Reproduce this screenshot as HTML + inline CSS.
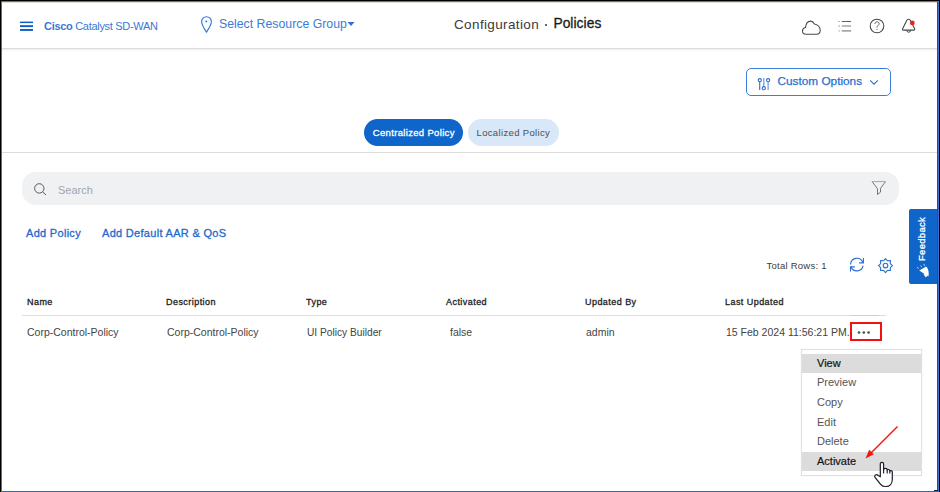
<!DOCTYPE html>
<html><head><meta charset="utf-8">
<style>
*{box-sizing:border-box;margin:0;padding:0}
html,body{width:940px;height:492px;overflow:hidden;background:#fff}
body{font-family:"Liberation Sans",sans-serif;position:relative;color:#333}
.abs{position:absolute;white-space:nowrap}
#frame{position:absolute;left:0;top:0;width:940px;height:492px;pointer-events:none;z-index:50}
.hdr{position:absolute;left:0;top:0;width:940px;height:49px;background:#fff;border-bottom:1px solid #dcdcdc;box-shadow:0 1px 2px rgba(0,0,0,.08)}
.blue{color:#2b6fcf}
</style></head><body>

<div class="hdr"></div>
<!-- hamburger -->
<svg class="abs" style="left:19px;top:20px" width="16" height="12" viewBox="0 0 16 12"><g fill="#0d5ec8"><rect x="1" y="1.6" width="13" height="1.5"/><rect x="1" y="5.2" width="13" height="1.9"/><rect x="1" y="9" width="13" height="1.9"/></g></svg>
<div class="abs" style="left:44px;top:20px;font-size:11px;letter-spacing:-0.3px;color:#3a78d4"><b>Cisco</b> Catalyst SD-WAN</div>

<!-- pin -->
<svg class="abs" style="left:199px;top:15px" width="15" height="19" viewBox="0 0 15 19"><path d="M7.5 17.1 C5 13.5 2.65 10.2 2.65 6.6 A4.85 4.85 0 0 1 12.35 6.6 C12.35 10.2 10 13.5 7.5 17.1Z" fill="none" stroke="#2f74d6" stroke-width="1.1"/><circle cx="7.3" cy="6.4" r="0.95" fill="#2f74d6"/></svg>
<div class="abs" style="left:219px;top:17.1px;font-size:12.3px;color:#3d7bd6">Select Resource Group</div>
<svg class="abs" style="left:347px;top:21px" width="8" height="6" viewBox="0 0 8 6"><path d="M0.5 1 L7.5 1 L4 5Z" fill="#2f6fd0"/></svg>

<div class="abs" style="left:454px;top:16.6px;font-size:13.5px;letter-spacing:0.37px;color:#3a3a3a">Configuration</div><div class="abs" style="left:545px;top:23.5px;width:2px;height:2px;border-radius:1px;background:#333"></div><div class="abs" style="left:553.4px;top:16.3px;font-size:13.8px;letter-spacing:0.05px;-webkit-text-stroke:0.3px #1a1a1a;color:#1a1a1a">Policies</div>

<!-- cloud -->
<svg class="abs" style="left:801px;top:20px" width="21" height="16" viewBox="0 0 21 16"><path d="M5 14.2 C2.8 14.2 1.5 12.8 1.5 11 C1.5 9.3 2.6 8.1 4.4 7.6 C4.9 4 6.9 1.1 9.5 1.1 C11.4 1.1 12.6 2.3 13.4 3.9 C16.8 4.7 19.2 7.3 19.2 10.3 C19.2 12.6 17.8 14.2 15.6 14.2 Z" fill="none" stroke="#4a4a4a" stroke-width="1.05"/></svg>
<!-- list -->
<svg class="abs" style="left:838px;top:20px" width="15" height="13" viewBox="0 0 15 13"><rect x="0.6" y="1" width="1" height="1" fill="#777"/><rect x="0.6" y="5.2" width="1" height="1.6" fill="#999"/><rect x="0.6" y="10.1" width="1" height="1.6" fill="#aaa"/><path d="M3.7 1.5 H13.1" stroke="#666" stroke-width="1.1"/><path d="M3.7 6 H13.1 M3.7 10.9 H13.1" stroke="#a8a8a8" stroke-width="1.7"/></svg>
<!-- help -->
<svg class="abs" style="left:869px;top:18px" width="16" height="16" viewBox="0 0 16 16"><circle cx="8" cy="8" r="6.8" fill="none" stroke="#444" stroke-width="1.05"/><path d="M5.9 5.9 C5.9 4.6 6.8 3.8 8 3.8 C9.3 3.8 10.2 4.7 10.2 5.8 C10.2 7.2 8 7.6 8 9.6" fill="none" stroke="#555" stroke-width="0.9"/><circle cx="8" cy="11.3" r="0.6" fill="#555"/></svg>
<!-- bell -->
<svg class="abs" style="left:900px;top:17px" width="18" height="18" viewBox="0 0 18 18"><path d="M8.5 2.2 C7.1 2.2 6.5 3.3 6.2 4.5 L2.6 11.8 C2.2 12.6 2.6 13.1 3.4 13.1 H13.8 C14.6 13.1 15 12.6 14.6 11.8 L11 4.5 C10.7 3.3 10 2.2 8.5 2.2Z" fill="none" stroke="#444" stroke-width="1.05"/><path d="M6.8 13.3 A1.9 1.9 0 0 0 10.6 13.3" fill="none" stroke="#444" stroke-width="1"/><circle cx="12.3" cy="5.9" r="2.4" fill="#e0281c"/></svg>

<!-- custom options -->
<div class="abs" style="left:746px;top:68px;width:145px;height:28px;border:1px solid #3a80d8;border-radius:5px"></div>
<svg class="abs" style="left:757px;top:77px" width="15" height="14" viewBox="0 0 15 14"><g fill="none" stroke="#2a6fd0" stroke-width="1.1"><circle cx="2.8" cy="3.2" r="1.6"/><path d="M2.7 4.8 V13"/><path d="M6.8 1 V9.4" stroke="#5a90d8"/><circle cx="6.8" cy="11.2" r="1.6"/><circle cx="11.1" cy="3.2" r="1.6"/><path d="M11.1 4.8 V13" stroke="#5a90d8"/></g></svg>
<div class="abs" style="left:777.5px;top:74.3px;font-size:11.8px;color:#2a6fd0;-webkit-text-stroke:0.25px #2a6fd0">Custom Options</div>
<svg class="abs" style="left:869px;top:79px" width="10" height="7" viewBox="0 0 10 7"><path d="M1.2 1.3 L5 5.1 L8.8 1.3" fill="none" stroke="#2a6fd0" stroke-width="1.1"/></svg>

<!-- tabs -->
<div class="abs" style="left:364px;top:119px;width:99px;height:27px;border-radius:14px;background:#0f65c9"></div>
<div class="abs" style="left:372.8px;top:127.2px;font-size:9.5px;color:#fff;letter-spacing:0.33px;-webkit-text-stroke:0.3px #fff">Centralized Policy</div>
<div class="abs" style="left:468px;top:119px;width:91px;height:27px;border-radius:14px;background:#d8e8f8"></div>
<div class="abs" style="left:476.5px;top:127.2px;font-size:9.5px;letter-spacing:0.35px;color:#50555c;-webkit-text-stroke:0.05px #50555c">Localized Policy</div>
<div class="abs" style="left:2px;top:152px;width:936px;height:1px;background:#dcdcdc"></div>

<!-- search -->
<div class="abs" style="left:22px;top:172px;width:877px;height:33px;border-radius:14px;background:#f0f1f3"></div>
<svg class="abs" style="left:33px;top:182px" width="15" height="14" viewBox="0 0 15 14"><circle cx="6.3" cy="6.4" r="4.7" fill="none" stroke="#5a5a5a" stroke-width="1"/><path d="M9.6 9.8 L13 13" stroke="#5a5a5a" stroke-width="1"/></svg>
<div class="abs" style="left:58px;top:184px;font-size:11px;color:#a2a7ad">Search</div>
<svg class="abs" style="left:871px;top:180px" width="16" height="16" viewBox="0 0 16 16"><path d="M14.5 1.6 L9.5 8.4 V12.1 L6.5 14.5 V8.7 L1.1 1.6" fill="none" stroke="#5a5f6a" stroke-width="0.85" stroke-linejoin="round"/><path d="M1.1 1.6 H14.5" stroke="#a5a5a5" stroke-width="1"/></svg>

<!-- links -->
<div class="abs" style="left:26px;top:226.9px;font-size:11px;letter-spacing:0.3px;color:#1f69cc;-webkit-text-stroke:0.3px #1f69cc">Add Policy</div>
<div class="abs" style="left:102px;top:226.9px;font-size:11px;letter-spacing:0.3px;color:#1f69cc;-webkit-text-stroke:0.3px #1f69cc">Add Default AAR &amp; QoS</div>

<!-- feedback -->
<div class="abs" style="left:909px;top:209px;width:29px;height:75px;background:#0f65c9;border-radius:2px 0 0 2px"></div>
<div class="abs" style="left:915.6px;top:261px;font-size:9.5px;letter-spacing:0.3px;color:#fff;-webkit-text-stroke:0.3px #fff;transform:rotate(-90deg);transform-origin:0 0">Feedback</div>
<svg class="abs" style="left:909px;top:209px" width="29" height="75" viewBox="0 0 29 75"><path d="M10.2 61.6 L17.2 57.6 C19.5 60 20.3 64 19.4 67.4 Z" fill="#fff"/><path d="M14.5 65 L16.5 68.2 L18.2 67.3 L17 64.5Z" fill="#fff"/><g stroke="#fff" stroke-width="0.9" stroke-linecap="round" opacity="0.85"><path d="M8.3 58.6 L9.3 59.2"/><path d="M12 56.9 L12.5 57.7"/><path d="M15.1 55.3 L15.3 56.3"/></g></svg>

<!-- total rows -->
<div class="abs" style="left:766.5px;top:260.3px;font-size:9.5px;letter-spacing:0.25px;color:#3a3d40">Total Rows: 1</div>
<svg class="abs" style="left:845px;top:254px" width="54" height="23" viewBox="0 0 54 23"><g fill="none" stroke="#2a6fd0" stroke-width="1.1"><path d="M5.6 10.6 A6.3 6.3 0 0 1 17.82 8.45"/><path d="M18.4 4 V8.9 H14.1"/><path d="M18.1 11.7 A6.3 6.3 0 0 1 5.98 12.75"/><path d="M5.5 17.5 V12.9 H9.8"/><path d="M40.50 4.60 L42.49 6.80 L45.45 6.65 L45.30 9.61 L47.50 11.60 L45.30 13.59 L45.45 16.55 L42.49 16.40 L40.50 18.60 L38.51 16.40 L35.55 16.55 L35.70 13.59 L33.50 11.60 L35.70 9.61 L35.55 6.65 L38.51 6.80Z" stroke-linejoin="round"/><circle cx="40.5" cy="11.6" r="2.3"/></g></svg>

<!-- table header -->
<div class="abs" style="left:27px;top:296.5px;font-size:9px;letter-spacing:0.45px;color:#222;-webkit-text-stroke:0.3px #222">Name</div>
<div class="abs" style="left:166px;top:296.5px;font-size:9px;letter-spacing:0.45px;color:#222;-webkit-text-stroke:0.3px #222">Description</div>
<div class="abs" style="left:306px;top:296.5px;font-size:9px;letter-spacing:0.45px;color:#222;-webkit-text-stroke:0.3px #222">Type</div>
<div class="abs" style="left:446px;top:296.5px;font-size:9px;letter-spacing:0.45px;color:#222;-webkit-text-stroke:0.3px #222">Activated</div>
<div class="abs" style="left:585px;top:296.5px;font-size:9px;letter-spacing:0.45px;color:#222;-webkit-text-stroke:0.3px #222">Updated By</div>
<div class="abs" style="left:725px;top:296.5px;font-size:9px;letter-spacing:0.45px;color:#222;-webkit-text-stroke:0.3px #222">Last Updated</div>
<div class="abs" style="left:22px;top:315px;width:864px;height:1px;background:#dedede"></div>

<!-- row -->
<div class="abs" style="left:27px;top:325.6px;font-size:10.5px;color:#444">Corp-Control-Policy</div>
<div class="abs" style="left:167px;top:325.6px;font-size:10.5px;color:#444">Corp-Control-Policy</div>
<div class="abs" style="left:307px;top:326.8px;font-size:10.2px;color:#444">UI Policy Builder</div>
<div class="abs" style="left:450px;top:325.6px;font-size:10.5px;color:#444">false</div>
<div class="abs" style="left:586px;top:325.6px;font-size:10.5px;color:#444">admin</div>
<div class="abs" style="left:726px;top:325.6px;font-size:10.5px;color:#444">15 Feb 2024 11:56:21 PM.</div>
<div class="abs" style="left:850px;top:322px;width:32px;height:19px;border:2px solid #f21010"></div><div class="abs" style="left:851px;top:314.5px;width:28px;height:1px;background:#cfcfcf"></div>
<svg class="abs" style="left:857px;top:330px" width="14" height="5" viewBox="0 0 14 5"><circle cx="2" cy="2.5" r="1.35" fill="#4a4f57"/><circle cx="6.8" cy="2.5" r="1.35" fill="#4a4f57"/><circle cx="11.6" cy="2.5" r="1.35" fill="#4a4f57"/></svg>

<!-- menu -->
<div class="abs" style="left:801px;top:349px;width:121px;height:127px;background:#fff;border:1px solid #e0e0e0;box-shadow:0 0 2px rgba(0,0,0,.06)"></div>
<div class="abs" style="left:802px;top:354px;width:119px;height:19px;background:#dcdcdc"></div>
<div class="abs" style="left:802px;top:452px;width:119px;height:19px;background:#dcdcdc"></div>
<div class="abs" style="left:817px;top:356.7px;font-size:11px;color:#141414;-webkit-text-stroke:0.2px #141414">View</div>
<div class="abs" style="left:817px;top:376.2px;font-size:11px;color:#555">Preview</div>
<div class="abs" style="left:817px;top:395.8px;font-size:11px;color:#555">Copy</div>
<div class="abs" style="left:817px;top:415.8px;font-size:11px;color:#555">Edit</div>
<div class="abs" style="left:817px;top:435.3px;font-size:11px;color:#555">Delete</div>
<div class="abs" style="left:817px;top:454.7px;font-size:11px;color:#141414;-webkit-text-stroke:0.2px #141414">Activate</div>

<!-- arrow -->
<svg class="abs" style="left:860px;top:422px" width="42" height="42" viewBox="0 0 42 42"><path d="M37.5 4.5 L8 34" stroke="#f41414" stroke-width="1.5"/><path d="M5.5 36.5 L9.2 27.8 L13.8 32.3Z" fill="#f41414"/></svg>
<!-- hand cursor -->
<svg class="abs" style="left:866px;top:455px" width="36" height="36" viewBox="0 0 36 36"><path d="M14.3 21.8 V8.9 C14.3 7.9 15 7.3 15.95 7.3 C16.9 7.3 17.6 7.9 17.6 8.9 V14.8 C17.6 13.9 18.4 13.4 19.4 13.4 C20.4 13.4 21.2 13.9 21.2 14.8 V15.6 C21.2 14.9 21.8 14.5 22.5 14.5 C23.2 14.5 23.8 14.9 23.8 15.6 V16.6 C23.8 16 24.4 15.6 25.05 15.6 C25.7 15.6 26.3 16 26.3 16.7 V24.5 C26.3 28.5 23.8 31.5 20 31.5 H18.6 C16.7 31.5 15.5 30.6 14.4 29.2 L9.2 22.6 C8.4 21.6 8.6 20.4 9.5 19.9 C10.4 19.4 11.4 19.7 12.2 20.5 Z" fill="#fff" stroke="#1c1c2a" stroke-width="1.2" stroke-linejoin="round"/><path d="M17.6 14.8 V18.6 M21.2 15.6 V18.6 M23.8 16.6 V18.6" stroke="#1c1c2a" stroke-width="1.1"/></svg>

<!-- frame -->
<div id="frame">
 <div style="position:absolute;left:0;top:0;width:940px;height:1px;background:#000"></div>
 <div style="position:absolute;left:1px;top:1px;width:938px;height:1px;background:#4677d2"></div>
 <div style="position:absolute;left:2px;top:2px;width:935px;height:1px;background:#e2ded6"></div>
 <div style="position:absolute;left:0;top:0;width:1px;height:492px;background:#000"></div>
 <div style="position:absolute;left:1px;top:1px;width:1px;height:491px;background:#3d6fd0"></div>
 <div style="position:absolute;left:937px;top:2px;width:1px;height:488px;background:#4d4b47"></div>
 <div style="position:absolute;left:934px;top:490px;width:4px;height:1px;background:#222"></div>
 <div style="position:absolute;left:938px;top:1px;width:1px;height:491px;background:#3f6fd0"></div>
 <div style="position:absolute;left:939px;top:0;width:1px;height:492px;background:#000"></div>
 <div style="position:absolute;left:2px;top:491px;width:937px;height:1px;background:#3464c6"></div>
</div>
</body></html>
